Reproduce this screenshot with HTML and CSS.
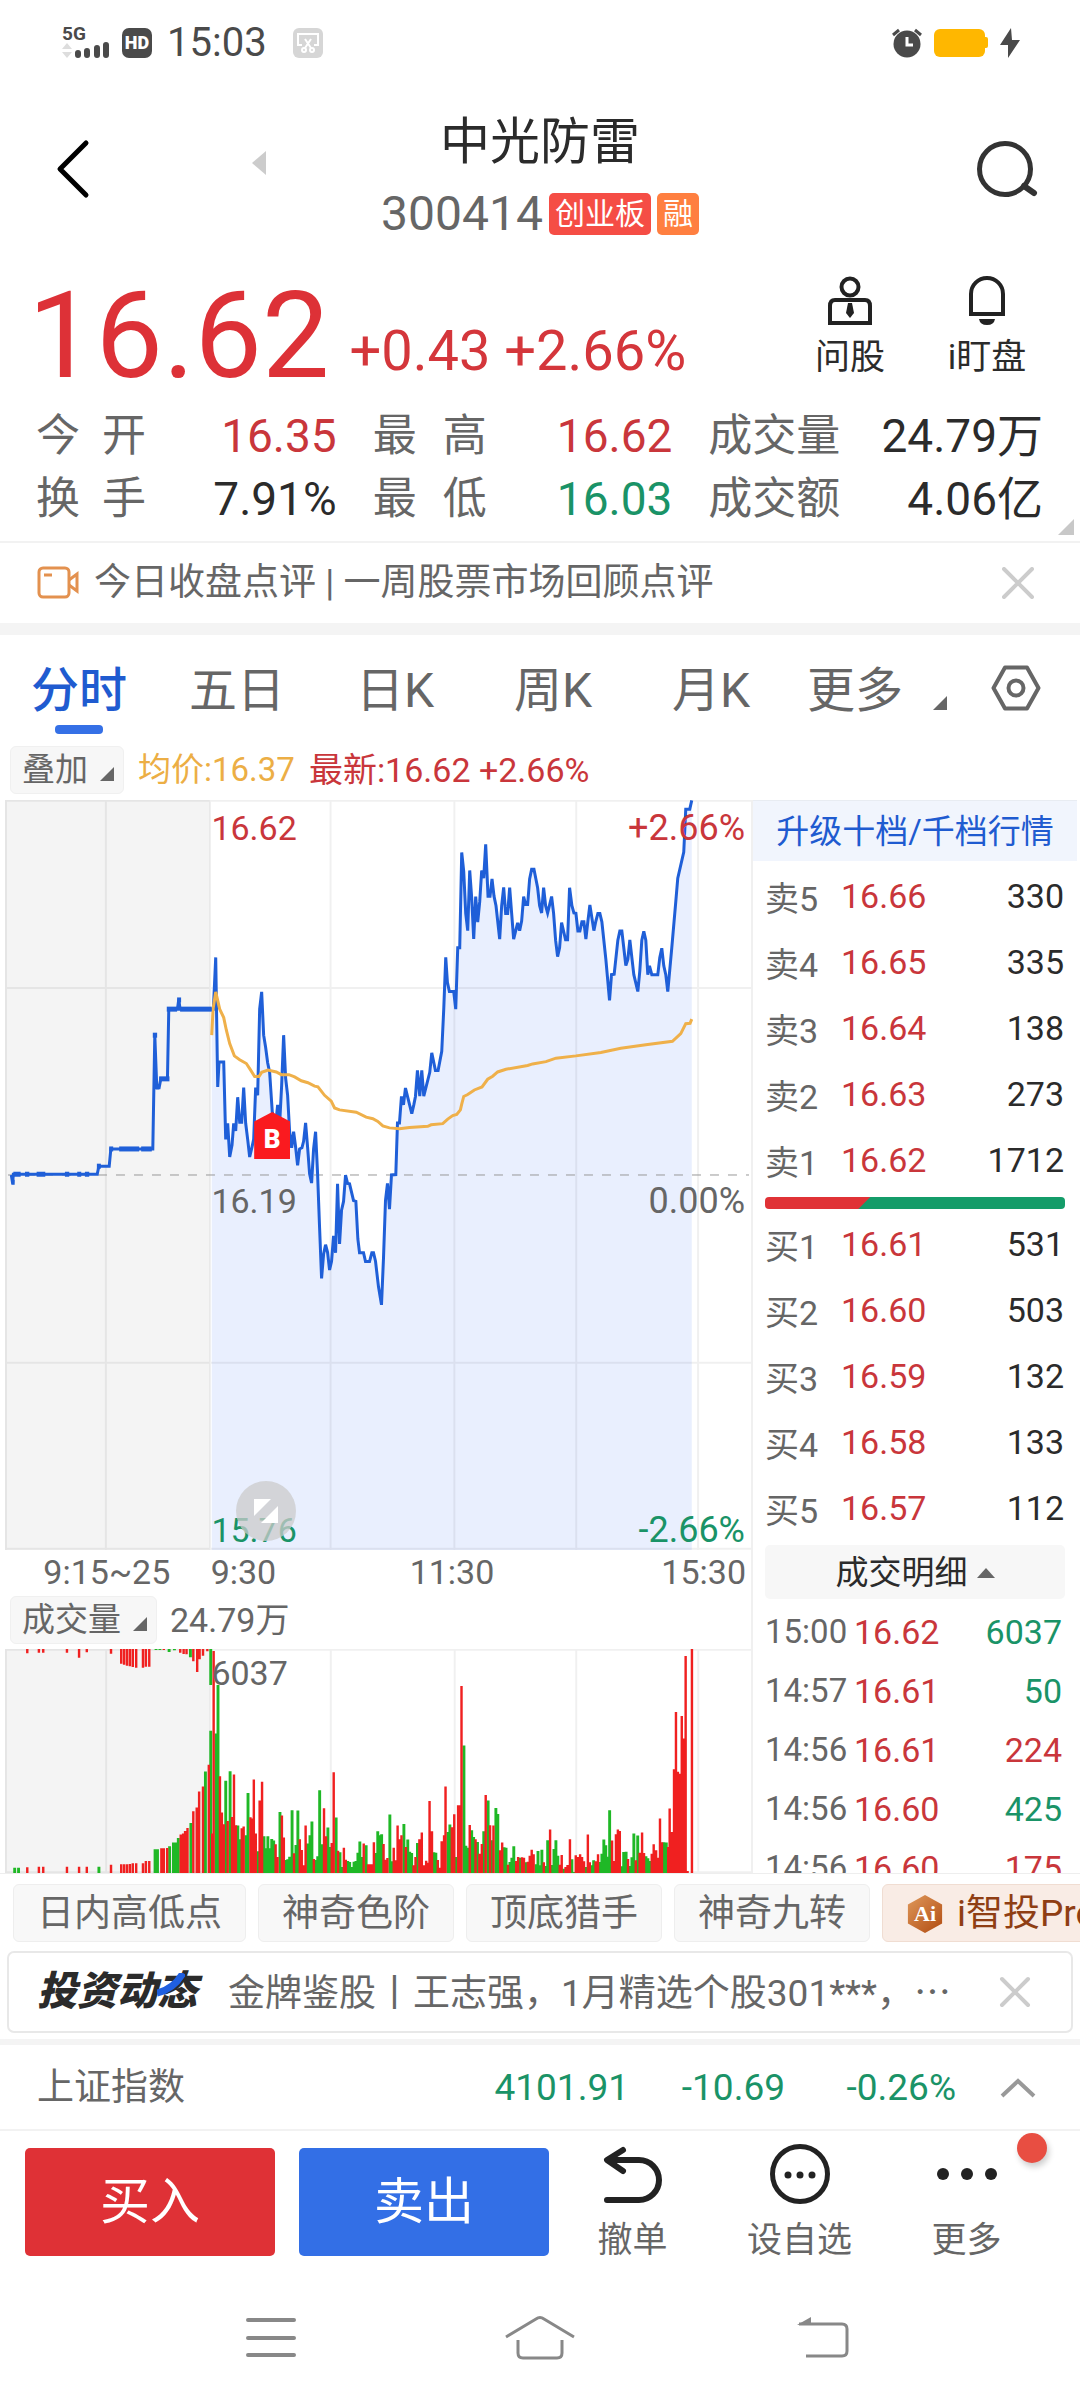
FILE: index.html
```html
<!DOCTYPE html>
<html lang="zh-CN">
<head>
<meta charset="utf-8">
<meta name="viewport" content="width=device-width">
<title>中光防雷 300414</title>
<link rel="stylesheet" href="styles.css">
</head>
<body>
<div class="status">
  <div class="signal">
    <span class="net">5G</span>
    <svg width="50" height="18" viewBox="0 0 50 18"><path fill="#ddd" d="M0 7l5-6 5 6zM0 10h10l-5 6z"/><path stroke="#4a4a4a" stroke-width="6" stroke-linecap="round" d="M16 11v2M25 9v4M35 6v7M44 3v10"/></svg>
  </div>
  <span class="hd">HD</span>
  <span class="clock">15:03</span>
  <svg class="shot" width="30" height="30" viewBox="0 0 30 30"><rect width="30" height="30" rx="6" fill="#d6d6d6"/><path d="M9 17H5V6h20v11h-4M12 11l6 9M18 11l-6 9" fill="none" stroke="#fff" stroke-width="2"/><circle cx="11" cy="22" r="2" fill="none" stroke="#fff" stroke-width="2"/><circle cx="19" cy="22" r="2" fill="none" stroke="#fff" stroke-width="2"/></svg>
  <div class="power">
    <svg width="30" height="30" viewBox="0 0 30 30"><circle cx="15" cy="16" r="13.5" fill="#4a4a4a"/><path d="M1 7l6-5M29 7l-6-5" stroke="#4a4a4a" stroke-width="3"/><path d="M15 9v8h6" fill="none" stroke="#fff" stroke-width="3"/></svg>
    <svg width="54" height="28" viewBox="0 0 54 28"><rect width="51" height="28" rx="6" fill="#ffb700"/><rect x="48" y="8" width="6" height="11" rx="2" fill="#ffb700"/></svg>
    <svg width="20" height="30" viewBox="0 0 20 30"><path d="M11 0L0 17h8l0 13L20 12h-8z" fill="#4a4a4a"/></svg>
  </div>
</div>

<header class="head">
  <div class="head-left">
    <button class="plain" aria-label="返回"><svg width="36" height="62" viewBox="0 0 36 62"><path d="M31 5L5 31l26 26" fill="none" stroke="#000" stroke-width="5" stroke-linecap="round" stroke-linejoin="round"/></svg></button>
    <button class="plain prev" aria-label="上一只"><svg width="14" height="24" viewBox="0 0 14 24"><path d="M14 0v24L0 12z" fill="#ccc"/></svg></button>
  </div>
  <div class="title">
    <h1>中光防雷</h1>
    <div class="code"><span>300414</span><span class="tag">创业板</span><span class="tag orange">融</span></div>
  </div>
  <button class="plain search" aria-label="搜索"><svg width="64" height="58" viewBox="0 0 64 58"><circle cx="29" cy="29" r="25.500" fill="none" stroke="#333" stroke-width="5"/><path d="M48 46l10 7" stroke="#333" stroke-width="6" stroke-linecap="round"/></svg></button>
</header>

<section class="quote">
  <div class="quote-top">
    <span class="price">16.62</span>
    <span class="change">+0.43 +2.66%</span>
    <div class="quote-tools">
      <button class="plain tool"><svg width="48" height="50" viewBox="0 0 48 50" fill="none" stroke="#222" stroke-width="4"><circle cx="24" cy="11" r="8.500"/><path d="M9 24h30q5 0 5 6v17H4V30q0-6 5-6z"/><path d="M22 27h4l2 10-4 5-4-5z" fill="#222" stroke="none"/></svg>问股</button>
      <button class="plain tool"><svg width="48" height="50" viewBox="0 0 48 50" fill="none" stroke="#222" stroke-width="4"><path d="M8 38V18a16 16 0 0 1 32 0v20z"/><path d="M16 43h16q-1 6-8 6t-8-6z" fill="#222" stroke="none"/></svg>i盯盘</button>
    </div>
  </div>
  <dl class="stats">
    <div><dt class="w1">今 开</dt><dd class="up">16.35</dd></div>
    <div><dt class="w2">最 高</dt><dd class="up">16.62</dd></div>
    <div><dt>成交量</dt><dd>24.79万</dd></div>
    <div><dt class="w1">换 手</dt><dd>7.91%</dd></div>
    <div><dt class="w2">最 低</dt><dd class="down">16.03</dd></div>
    <div><dt>成交额</dt><dd>4.06亿</dd></div>
  </dl>
  <svg class="corner" width="16" height="16" viewBox="0 0 16 16"><path d="M16 0v16H0z" fill="#c8c8c8"/></svg>
</section>

<div class="notice">
  <svg width="42" height="34" viewBox="0 0 42 34" fill="none" stroke="#e3914f" stroke-width="3"><rect x="2" y="2" width="30" height="29" rx="4"/><path d="M32 14l8-6v17l-8-6M7 9h8"/></svg>
  <a href="#">今日收盘点评 | 一周股票市场回顾点评</a>
  <button class="plain" aria-label="关闭"><svg width="32" height="32" viewBox="0 0 32 32"><path d="M2 2l28 28M30 2L2 30" stroke="#ccc" stroke-width="4" stroke-linecap="round"/></svg></button>
</div>

<nav class="tabs">
  <button class="plain on">分时</button>
  <button class="plain">五日</button>
  <button class="plain">日K</button>
  <button class="plain">周K</button>
  <button class="plain">月K</button>
  <button class="plain more">更多<svg width="14" height="14" viewBox="0 0 14 14"><path d="M14 0v14H0z" fill="#666"/></svg></button>
  <button class="plain" aria-label="设置"><svg width="50" height="46" viewBox="0 0 50 46" fill="none" stroke="#666" stroke-width="4"><path d="M14 2.500h22L47.500 23 36 43.500H14L2.500 23z" stroke-linejoin="round"/><circle cx="25" cy="23" r="7.500"/></svg></button>
</nav>

<div class="legend">
  <button class="pill">叠加<svg width="14" height="14" viewBox="0 0 14 14"><path d="M14 0v14H0z" fill="#666"/></svg></button>
  <span class="avg">均价:16.37</span>
  <span class="up">最新:16.62 +2.66%</span>
</div>

<main class="market">
  <div class="charts">
    <div class="chart">
      <svg viewBox="15 54 2241 1958" preserveAspectRatio="none">
        <rect x="15" y="54" width="615" height="1958" fill="#f4f4f4"/>
        <g id="price"></g>
        <path class="grid" d="M15 56H2256M15 545H2256M15 1523H2256M15 2009H2256M18 54V2012M318 54V2012M631 54V2012M993 54V2012M1365 54V2012M1731 54V2012M2097 54V2012"/>
        <path class="dash" d="M24 1033H2250"/>
        <g id="lines"></g>
      </svg>
      <span class="mark">B</span>
      <span class="lab l t up">16.62</span>
      <span class="lab r t up">+2.66%</span>
      <span class="lab l m">16.19</span>
      <span class="lab r m">0.00%</span>
      <span class="lab l b down">15.76</span>
      <span class="lab r b down">-2.66%</span>
      <button class="plain expand" aria-label="全屏"><svg width="60" height="60" viewBox="0 0 60 60"><circle cx="30" cy="30" r="30" fill="#cbcbcb" fill-opacity=".75"/><path d="M18 18h17L18 35zM42 25v17H25z" fill="#fff"/></svg></button>
    </div>
    <div class="axis"><span>9:15~25</span><span>9:30</span><span>11:30</span><span>15:30</span></div>
    <div class="vol-head"><button class="pill">成交量<svg width="14" height="14" viewBox="0 0 14 14"><path d="M14 0v14H0z" fill="#666"/></svg></button><span>24.79万</span></div>
    <div class="volume">
      <svg viewBox="10 87 1541 671" preserveAspectRatio="none">
        <rect x="10" y="87" width="423" height="671" fill="#f4f4f4"/>
        <path class="grid" d="M10 89H1551M10 756H1551M12 87V758M219 87V758M434 87V758M683 87V758M939 87V758M1190 87V758M1442 87V758"/>
        <g id="bars"></g>
      </svg>
      <span class="lab l">6037</span>
    </div>
  </div>

  <aside class="book">
    <a class="upgrade" href="#">升级十档/千档行情</a>
    <table>
      <tr><th>卖5</th><td class="up">16.66</td><td>330</td></tr>
      <tr><th>卖4</th><td class="up">16.65</td><td>335</td></tr>
      <tr><th>卖3</th><td class="up">16.64</td><td>138</td></tr>
      <tr><th>卖2</th><td class="up">16.63</td><td>273</td></tr>
      <tr><th>卖1</th><td class="up">16.62</td><td>1712</td></tr>
    </table>
    <div class="ratio"></div>
    <table>
      <tr><th>买1</th><td class="up">16.61</td><td>531</td></tr>
      <tr><th>买2</th><td class="up">16.60</td><td>503</td></tr>
      <tr><th>买3</th><td class="up">16.59</td><td>132</td></tr>
      <tr><th>买4</th><td class="up">16.58</td><td>133</td></tr>
      <tr><th>买5</th><td class="up">16.57</td><td>112</td></tr>
    </table>
    <button class="detail">成交明细<svg width="18" height="10" viewBox="0 0 18 10"><path d="M9 0l9 10H0z" fill="#666"/></svg></button>
    <table class="trades">
      <tr><th>15:00</th><td class="up">16.62</td><td class="down">6037</td></tr>
      <tr><th>14:57</th><td class="up">16.61</td><td class="down">50</td></tr>
      <tr><th>14:56</th><td class="up">16.61</td><td class="up">224</td></tr>
      <tr><th>14:56</th><td class="up">16.60</td><td class="down">425</td></tr>
      <tr><th>14:56</th><td class="up">16.60</td><td class="up">175</td></tr>
    </table>
  </aside>
</main>

<div class="chips">
  <button>日内高低点</button>
  <button>神奇色阶</button>
  <button>顶底猎手</button>
  <button>神奇九转</button>
  <button class="ai"><span class="hex">Ai</span>i智投Pro</button>
</div>

<div class="news">
  <span class="brand">投资动态<svg width="28" height="24" viewBox="0 0 28 24"><path d="M26 0Q17 16 0 20" fill="none" stroke="#1f5fe0" stroke-width="7"/></svg></span>
  <a href="#">金牌鉴股丨王志强，1月精选个股301***，<span class="dots">…</span></a>
  <button class="plain" aria-label="关闭"><svg width="32" height="32" viewBox="0 0 32 32"><path d="M3 3l26 26M29 3L3 29" stroke="#ccc" stroke-width="4" stroke-linecap="round"/></svg></button>
</div>

<div class="index">
  <span class="name">上证指数</span>
  <span class="down">4101.91</span><span class="down">-10.69</span><span class="down">-0.26%</span>
  <button class="plain" aria-label="展开"><svg width="36" height="20" viewBox="0 0 36 20"><path d="M2 18L18 3l16 15" fill="none" stroke="#999" stroke-width="4"/></svg></button>
</div>

<footer class="actions">
  <div class="trade"><button class="buy">买入</button><button class="sell">卖出</button></div>
  <div class="tools">
    <button class="plain"><svg width="60" height="60" viewBox="0 0 60 60" fill="none" stroke="#222" stroke-width="6" stroke-linecap="round" stroke-linejoin="round"><path d="M20 6L4 16l16 11M5 16h31a20 20 0 0 1 0 40H4"/></svg>撤单</button>
    <button class="plain"><svg width="60" height="60" viewBox="0 0 60 60"><circle cx="30" cy="30" r="27.500" fill="none" stroke="#222" stroke-width="5"/><g fill="#222"><circle cx="18" cy="31" r="3.500"/><circle cx="30" cy="31" r="3.500"/><circle cx="42" cy="31" r="3.500"/></g></svg>设自选</button>
    <button class="plain"><svg width="60" height="60" viewBox="0 0 60 60" fill="#222"><circle cx="6" cy="30" r="6"/><circle cx="30" cy="30" r="6"/><circle cx="54" cy="30" r="6"/></svg>更多<i class="badge"></i></button>
  </div>
</footer>

<nav class="sysnav">
  <button class="plain" aria-label="任务"><svg width="52" height="44" viewBox="0 0 52 44" stroke="#888" stroke-width="4" stroke-linecap="round"><path d="M3 4h46M3 22h46M3 39h46"/></svg></button>
  <button class="plain" aria-label="主页"><svg width="70" height="46" viewBox="0 0 70 46" fill="none" stroke="#888" stroke-width="3" stroke-linejoin="round"><path d="M1 22L31 4q4-3 8 0l30 18M13 25v13q0 5 5 5h34q5 0 5-5V25"/></svg></button>
  <button class="plain" aria-label="返回"><svg width="52" height="44" viewBox="0 0 52 44" fill="none" stroke="#888" stroke-width="3"><path d="M2 8h43q5 0 5 5v22q0 5-5 5H9"/><path d="M0 9L14 1v8z" fill="#888" stroke="none"/></svg></button>
</nav>
<script src="charts.js"></script>
</body>
</html>
```
FILE: styles.css
```css
* { box-sizing: border-box; }
body {
  margin: 0;
  background: #fff;
  color: #2b2b2b;
  font-family: Roboto, "Noto Sans CJK SC", sans-serif;
  font-size: 34px;
  overflow-x: hidden;
}
svg { display: block; flex: none; }
button { font-family: inherit; color: inherit; cursor: pointer; }
a { color: inherit; text-decoration: none; }
.plain { border: 0; padding: 0; background: none; }
.up { color: #c9363b; }
.down { color: #1a9367; }

.status { display: flex; align-items: center; height: 86px; padding: 0 60px 0 62px; color: #4a4a4a; }
.signal { width: 60px; }
.net { display: block; font-size: 19px; font-weight: 700; line-height: 16px; }
.hd { width: 30px; height: 30px; border-radius: 7px; background: #4a4a4a; color: #fff; font-size: 18px; font-weight: 900; line-height: 30px; text-align: center; }
.clock { margin-left: 15px; font-size: 40px; line-height: 44px; }
.shot { margin-left: 26px; }
.power { display: flex; align-items: center; gap: 12px; margin-left: auto; }

.head { display: grid; grid-template-columns: 1fr auto 1fr; align-items: center; height: 166px; }
.head-left { display: flex; align-items: center; gap: 161px; padding-left: 55px; }
.prev { margin-bottom: 12px; }
.title { display: flex; flex-direction: column; align-items: center; gap: 16px; padding: 9px 0 0; }
.title h1 { margin: 0; font-size: 50px; font-weight: 400; line-height: 64px; }
.code { display: flex; align-items: center; gap: 6px; height: 48px; color: #666; font-size: 48px; line-height: 48px; }
.tag { height: 42px; padding: 0 6px; border-radius: 5px; background: #f54d45; color: #fff; font-size: 30px; line-height: 42px; }
.orange { background: #ff7f40; }
.search { justify-self: end; margin-right: 40px; }

.quote { position: relative; padding: 24px 0 11px; }
.quote-top { display: flex; align-items: flex-end; gap: 20px; height: 128px; padding: 0 33px 8px 28px; }
.price { color: #dd3137; font-size: 120px; line-height: 120px; }
.change { padding-bottom: 18px; color: #d4363b; font-size: 56px; line-height: 54px; white-space: nowrap; }
.quote-tools { display: flex; gap: 17px; align-self: flex-start; margin-left: auto; }
.tool { display: flex; flex-direction: column; align-items: center; gap: 12px; width: 120px; font-size: 35px; line-height: 40px; }
.stats { display: grid; grid-template-columns: 301fr 300fr 335fr; column-gap: 36px; margin: 0; padding: 0 37px 0 36px; }
.stats div { display: flex; align-items: center; justify-content: space-between; height: 63px; }
.stats dt { color: #666; font-size: 44px; line-height: 60px; }
.stats dd { margin: 0; font-size: 46px; line-height: 60px; }
.w1 { width: 110px; text-align-last: justify; }
.w2 { width: 114px; text-align-last: justify; }
.corner { position: absolute; right: 6px; bottom: 6px; }

.notice { display: flex; align-items: center; height: 82px; padding: 0 46px 0 37px; border-top: 2px solid #f2f2f2; color: #666; font-size: 37px; }
.notice a { flex: 1; margin-left: 15px; line-height: 50px; }

.tabs { display: grid; grid-template-columns: repeat(5, 158fr) 174fr 104fr; height: 122px; padding-right: 12px; border-top: 12px solid #f4f4f4; color: #666; }
.tabs button { position: relative; display: flex; align-items: center; justify-content: center; padding-bottom: 8px; font-size: 48px; }
.tabs button:last-child { padding-bottom: 4px; }
.tabs .on { color: #1f5bd0; font-weight: 500; }
.on::after { content: ""; position: absolute; left: 50%; bottom: 11px; width: 48px; height: 9px; margin-left: -24px; border-radius: 4px; background: #3570e6; }
.tabs .more { padding-bottom: 8px; }
.more svg { align-self: flex-end; margin: 0 0 27px 30px; }

.legend { display: flex; align-items: center; gap: 14px; height: 55px; padding: 0 0 5px 10px; line-height: 46px; }
.pill { display: flex; align-items: center; gap: 12px; height: 48px; padding: 0 9px 0 11px; border: 1px solid #f0f0f0; border-radius: 6px; background: #f7f7f7; color: #666; font-size: 33px; line-height: 46px; }
.pill svg { margin-top: 8px; }
.avg { color: #ecae45; font-size: 33px; }

.market { display: grid; grid-template-columns: 751fr 329fr; height: 1073px; overflow: hidden; }
.charts { padding-left: 5px; color: #666; }
.chart, .volume { position: relative; height: 750px; }
.volume { height: 224px; }
.chart > svg, .volume > svg { width: 100%; height: 100%; }
.grid { fill: none; stroke: #000; stroke-opacity: .06; stroke-width: 2; vector-effect: non-scaling-stroke; }
.dash { fill: none; stroke: #999; stroke-width: 1; stroke-dasharray: 9 9; vector-effect: non-scaling-stroke; }
.line { fill: none; stroke: #1f5fd8; stroke-width: 3; vector-effect: non-scaling-stroke; }
.tick { stroke-width: 5; }
.avg-line { fill: none; stroke: #efb04a; stroke-width: 3; vector-effect: non-scaling-stroke; }
.lab { position: absolute; top: 8px; line-height: 40px; }
.l { left: 27%; padding-left: 5px; }
.r { right: 6px; font-size: 36px; }
.m { top: 381px; color: #666; }
.b { top: auto; bottom: 0; }
.volume .lab { top: 4px; }
.mark { position: absolute; left: 33%; top: 312px; width: 36px; height: 47px; margin-left: 3px; padding-top: 8px; background: #fa1a1f; clip-path: polygon(0 20%, 50% 0, 100% 20%, 100% 100%, 0 100%); color: #fff; font-size: 26px; font-weight: 900; line-height: 39px; text-align: center; }
.expand { position: absolute; left: 31%; bottom: 9px; }
.axis { display: grid; grid-template-columns: 205fr 120fr 250fr 171fr; height: 44px; padding-right: 5px; line-height: 44px; text-align: center; }
.axis span:nth-child(2) { text-align: left; padding-left: 2px; }
.axis span:nth-child(4) { text-align: right; }
.vol-head { display: flex; align-items: center; gap: 13px; height: 55px; padding: 0 0 4px 5px; line-height: 46px; }

.book { border-left: 2px solid #f0f0f0; padding-right: 3px; }
.upgrade { display: block; height: 61px; background: #f1f5fd; color: #1f5bd0; font-size: 33px; line-height: 62px; text-align: center; border-top: 1px solid #e8ecf2; }
.book table { width: 299px; margin: 2px 0 0 12px; border-spacing: 0; table-layout: fixed; }
.book tr { height: 66px; }
.book th { width: 76px; padding: 0; color: #666; font-weight: 400; text-align: left; }
.book td { padding: 0; line-height: 40px; }
.book td:last-child { text-align: right; }
.ratio { width: 300px; height: 12px; margin: 4px 0 0 12px; border-radius: 4px; background: linear-gradient(135deg, #e03236 74px, #149c69 75px); }
.detail { display: flex; align-items: center; justify-content: center; gap: 9px; width: 300px; height: 54px; margin: 4px 0 0 12px; padding: 2px 0 0; border: 0; border-radius: 5px; background: #f7f7f7; font-size: 33px; line-height: 52px; }
.book .trades { margin-top: 3px; width: 297px; }
.book .trades tr { height: 59px; }
.book .trades th { width: 89px; font-size: 33px; }

.chips { display: flex; gap: 12px; padding: 10px 0 9px 13px; overflow: hidden; border-top: 1px solid #eee; }
.chips button { display: flex; align-items: center; flex: none; height: 58px; padding: 2px 23px 0; border: 1px solid #eee; border-radius: 6px; background: #f8f8f8; color: #666; font-size: 37px; line-height: 54px; }
.chips .ai { gap: 13px; border-color: #f0ddd2; background: #f9ece5; color: #8f3e14; }
.hex { width: 38px; height: 38px; background: linear-gradient(135deg, #e09a5c, #b04a10); clip-path: polygon(50% 0, 95% 25%, 95% 75%, 50% 100%, 5% 75%, 5% 25%); color: #fff; font-family: "Liberation Serif", serif; font-size: 22px; font-weight: 700; line-height: 38px; text-align: center; }

.news { display: flex; align-items: center; height: 82px; margin: 0 7px 6px; padding: 0 40px 0 28px; border: 2px solid #e8e8e8; border-radius: 7px; color: #666; font-size: 37px; }
.brand { position: relative; width: 164px; color: #2b2b2b; font-size: 40px; font-weight: 900; font-style: italic; line-height: 50px; white-space: nowrap; }
.brand svg { position: absolute; right: 16px; top: 6px; }
.news a { flex: 1; margin-left: 27px; line-height: 50px; white-space: nowrap; }
.dots { font-family: "Noto Sans CJK SC", sans-serif; }

.index { display: flex; align-items: center; height: 92px; padding: 2px 44px 0 37px; border-top: 6px solid #f4f4f4; border-bottom: 2px solid #f2f2f2; color: #666; font-size: 37px; line-height: 50px; }
.name { flex: 1; }
.index .down { min-width: 115px; margin-right: 41px; text-align: right; }
.index .down:nth-child(4) { min-width: 130px; margin-right: 44px; }

.actions { display: grid; grid-template-columns: 524fr 501fr; height: 144px; padding: 17px 30px 0 25px; }
.trade { display: flex; gap: 24px; }
.trade button { flex: 1; height: 108px; border: 0; border-radius: 5px; color: #fff; font-size: 50px; line-height: 70px; }
.buy { background: #df3136; }
.sell { background: #336fe6; }
.tools { display: grid; grid-template-columns: repeat(3, 1fr); align-items: start; color: #666; }
.tools button { position: relative; display: flex; flex-direction: column; align-items: center; gap: 15px; margin-top: -4px; font-size: 35px; line-height: 44px; }
.badge { position: absolute; right: 3px; top: -11px; width: 30px; height: 30px; border-radius: 50%; background: #e84e42; box-shadow: 2px 4px 6px #0003; }

.sysnav { display: grid; grid-template-columns: 166px repeat(3, 1fr) 166px; height: 126px; align-items: center; justify-items: center; }
.sysnav button:first-child { grid-column: 2; justify-self: start; margin-left: 79px; }
.sysnav button:last-child { justify-self: end; margin-right: 65px; }
```
FILE: charts.js
```js
const NS = "http://www.w3.org/2000/svg";
function add(parent, d, attrs) {
  const p = document.createElementNS(NS, "path");
  p.setAttribute("d", d);
  for (const k in attrs) p.setAttribute(k, attrs[k]);
  document.getElementById(parent).append(p);
}

// Call auction, continuous session and running average
const auction = "34,1033 38,1055 40,1031 292,1031 297,1010 328,1010 333,965 459,965 465,668 471,805 478,805 483,782 503,782 507,600 533,600 537,575 541,600 636,600";
const session = "636,600 641,600 648,465 654,803 658,738 672,738 678,940 684,898 690,986 697,955 702,898 708,918 714,830 720,895 726,895 732,805 738,898 744,940 750,986 757,960 762,940 768,805 774,825 780,600 786,555 792,668 798,700 804,740 810,765 818,870 826,920 834,850 840,900 846,800 852,668 858,780 864,825 870,920 876,962 882,920 888,960 894,1008 900,965 907,962 912,945 918,897 924,960 930,1030 936,1054 942,965 948,920 954,1030 960,1170 966,1303 972,1240 978,1215 984,1235 990,1281 996,1258 1002,1192 1008,1236 1014,1056 1020,1213 1026,1125 1032,1102 1038,1033 1044,1055 1050,1056 1062,1100 1069,1102 1075,1200 1080,1236 1092,1236 1098,1259 1110,1259 1117,1236 1122,1236 1128,1258 1137,1325 1146,1372 1152,1250 1158,1100 1164,1055 1170,1122 1176,1033 1189,1032 1194,897 1200,897 1206,828 1212,850 1218,806 1237,873 1243,850 1248,828 1254,760 1261,827 1267,760 1273,827 1291,765 1297,714 1308,760 1316,760 1327,710 1333,600 1339,465 1344,530 1350,554 1363,554 1369,600 1375,440 1381,440 1387,191 1393,240 1399,350 1405,395 1411,238 1417,310 1423,417 1429,306 1435,373 1441,320 1447,238 1453,258 1459,170 1466,305 1472,305 1478,260 1484,305 1490,330 1501,417 1507,330 1513,282 1519,350 1525,350 1531,283 1537,350 1543,417 1555,375 1561,395 1567,370 1573,306 1579,327 1585,327 1591,260 1597,235 1604,235 1615,283 1621,330 1627,349 1633,283 1639,330 1645,349 1657,306 1663,350 1669,420 1675,463 1681,440 1687,374 1699,419 1705,419 1711,283 1718,330 1724,349 1730,350 1736,396 1742,396 1748,372 1754,372 1760,417 1766,370 1772,328 1784,395 1790,370 1796,350 1802,350 1808,372 1820,470 1831,577 1837,510 1845,509 1856,420 1862,396 1868,396 1880,486 1886,470 1892,419 1904,510 1916,554 1922,500 1928,420 1934,397 1940,420 1946,510 1951,487 1958,510 1976,510 1982,465 1988,441 1994,487 2000,510 2006,554 2018,440 2030,320 2036,258 2054,190 2060,78 2072,78 2078,55";
const average = "636,668 640,600 648,555 660,600 672,622 680,655 690,690 704,722 720,732 740,742 752,758 765,776 778,776 786,765 805,759 830,764 845,771 868,771 885,777 905,787 925,792 945,801 955,803 975,825 995,840 1005,858 1020,863 1070,869 1100,882 1120,886 1135,893 1150,905 1170,910 1200,912 1230,909 1285,906 1295,902 1330,899 1345,887 1360,878 1372,875 1383,863 1387,848 1393,828 1405,823 1425,811 1448,803 1465,783 1480,775 1495,764 1520,757 1585,747 1600,743 1640,737 1670,728 1730,722 1805,713 1865,702 1940,693 2020,684 2045,664 2060,638 2073,637 2078,626";
add("price", "M" + session + " V2012 H636z", { fill: "#e9effe" });
add("lines", "M" + auction, { class: "line" });
add("lines", "M" + session, { class: "line" });
add("lines", "M" + average, { class: "avg-line" });
// Auction ticks
for (const [x1, x2, y] of [[34, 44, 1052], [40, 62, 1031], [75, 88, 1031], [110, 136, 1031], [195, 208, 1031], [232, 244, 1031], [255, 268, 1031], [291, 303, 1010], [328, 340, 965], [358, 418, 965], [424, 456, 965], [459, 472, 668], [468, 478, 803], [478, 509, 782], [501, 532, 600], [532, 544, 576], [541, 636, 600]])
  add("lines", `M${x1} ${y}H${x2}`, { class: "line tick" });

// Each entry: x, colour (r/g), end of the bar
const hanging = "56r100 80r98 89r98 138r98 163r113 179r97 229r101 250r131 256r134 262r137 268r139 274r141 281r143 295r143 301r140 308r140 322g90 330g90 338r90 349g96 360g91 372r98 379r102 385r103 393g112 399r124 407r156 412r118 419r107 428r94 435g195";
const rising = "30g742 38g742 56r741 80r739 89r739 138r739 163r739 179r739 204g739 229r733 250r732 256r732 262r732 268r731 274r729 281r729 295r729 301r722 308r722 320g687 325g687 333r684 338r684 345r683 350g678 358g667 363g667 368g653 373r643 378r640 382r632 387r623 394g608 399r573 406r562 411r514 419r499 424g454 431r434 435g332 438r640 441r93 446g340 450g195 454r468 458r577 462r612 466g482 470r602 475g453 479r590 483r463 487r615 491g616 495g657 499r624 503r619 508g645 512g518 517r591 520r595 524r478 528r640 532g693 536r541 541r485 545g648 549g684 553g648 557g684 561g656 565g661 569r672 573r710 578g575 582r586 586r652 590g719 594g717 598g709 603g570 607r699 611g674 615g571 619r657 623r689 627r735 631r616 635g670 640g645 644g604 648r716 652g719 656g708 660g510 664g672 669r564 673r648 677g622 681g680 685r668 689r456 694g592 698r691 702g696 706g740 710r682 714r718 718g722 722g725 726g740 731g724 735g722 739g697 743g664 747g710 751r670 756g675 760r732 764r732 768r732 772r666 776g698 780g633 784g645 788g642 792r671 796r718 800r713 805g583 809g723 813r682 817r720 821r616 826r657 829r645 834g611 838r680 842g658 846g694 850g698 854r735 858r710 862g668 866r657 871r637 875r735 880r721 884r727 887r542 892r633 896g696 900g697 904r719 908r742 912r663 917r645 920r499 925g635 929g613 933r621 938r582 942g710 946r555 949r555 953r198 958g376 962g676 966g682 970r614 974g630 978g650 982r657 986g665 990r700 995r671 999g633 1003r524 1008g541 1012r615 1016g660 1019r616 1024g563 1028g581 1033r690 1037r667 1041g681 1045g682 1049r733 1053g725 1057g712 1061g678 1066r722 1070r710 1074g712 1078r711 1082r712 1086g726 1090r724 1094r706 1098r688 1102r702 1107g732 1111g692 1115g735 1119g688 1123r726 1127g737 1131g660 1136r628 1140g734 1144g686 1148g660 1152g706 1156r733 1160r704 1164g745 1168r740 1172r734 1177r657 1181g717 1185g755 1189r705 1193r710 1198r702 1202r710 1206r723 1210g740 1214r643 1218r726 1222g735 1226g720 1230r723 1235r702 1239g725 1243g700 1247g658 1251g675 1255g709 1259g570 1264r661 1268r722 1272r642 1276r628 1280r632 1284g738 1288g695 1293g694 1297r716 1301g737 1305g711 1309g640 1313r720 1317g646 1321r697 1326r637 1330r698 1334g708 1338g714 1342g722 1346r700 1350r672 1355r690 1359r712 1363r595 1367r666 1371g666 1376g667 1380r680 1383r565 1388r635 1392r447 1396r276 1400r455 1404r461 1408r288 1412r355 1416r108 1420r752 1429r87";
function bars(data, base) {
  const d = { r: "", g: "" };
  for (const item of data.split(" ")) {
    const [, x, c, y] = item.match(/(\d+)([rg])(\d+)/);
    d[c] += `M${x} ${base}V${y}`;
  }
  add("bars", d.g, { stroke: "#1fb826", "stroke-width": 6 });
  add("bars", d.r, { stroke: "#f02020", "stroke-width": 5 });
}
bars(hanging, 87);
bars(rising, 758);
```
